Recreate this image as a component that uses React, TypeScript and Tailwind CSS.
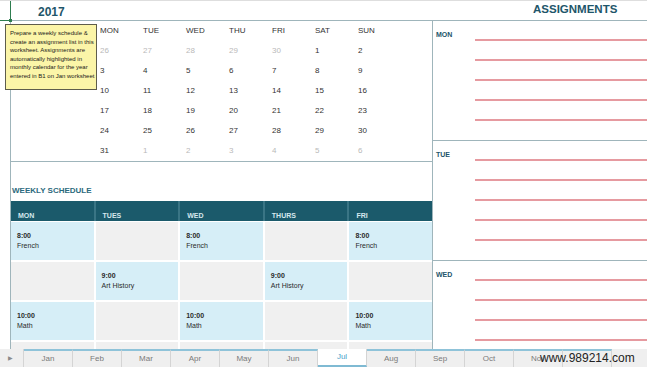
import React from "react";

const C = { line: "#9fb5bb" };

type Day = [number, boolean];
const weeks: Day[][] = [
  [[26, true], [27, true], [28, true], [29, true], [30, true], [1, false], [2, false]],
  [[3, false], [4, false], [5, false], [6, false], [7, false], [8, false], [9, false]],
  [[10, false], [11, false], [12, false], [13, false], [14, false], [15, false], [16, false]],
  [[17, false], [18, false], [19, false], [20, false], [21, false], [22, false], [23, false]],
  [[24, false], [25, false], [26, false], [27, false], [28, false], [29, false], [30, false]],
  [[31, false], [1, true], [2, true], [3, true], [4, true], [5, true], [6, true]],
];

type Slot = { t: string; s: string } | null;
const fr = { t: "8:00", s: "French" };
const ah = { t: "9:00", s: "Art History" };
const ma = { t: "10:00", s: "Math" };
const sched: Slot[][] = [
  [fr, null, fr, null, fr],
  [null, ah, null, ah, null],
  [ma, null, ma, null, ma],
  [null, null, null, null, null],
];

const tabs = ["Jan", "Feb", "Mar", "Apr", "May", "Jun", "Jul", "Aug", "Sep", "Oct", "Nov"];

function AssignSection({ label, lines }: { label: string; lines: number }) {
  return (
    <div className="h-[120px] shrink-0 flex border-b border-[#9fb5bb]">
      <div className="w-[42px] pl-[3px] pt-[10px] text-[7px] leading-[7px] font-bold text-[#23546a]">{label}</div>
      <div className="flex-1 flex flex-col pt-[18px] gap-[18px]">
        {Array.from({ length: lines }).map((_, i) => (
          <div key={i} className="h-[2px] bg-[#e69aa0]" />
        ))}
      </div>
    </div>
  );
}

export default function App() {
  return (
    <div className="w-[647px] h-[367px] overflow-hidden bg-white flex flex-col relative font-['Liberation_Sans',Arial,sans-serif]">
      <div className="h-[1px] shrink-0 bg-[#dedede]" />
      {/* header row */}
      <div className="h-[20px] shrink-0 flex">
        <div className="w-[11px] border-r border-b border-[#2e7d4f]" />
        <div className="w-[422px] border-b border-[#9fb5bb] pl-[27px] pt-[5px] text-[12px] leading-[12px] font-bold text-[#1e566a]">2017</div>
        <div className="flex-1 border-b border-[#9fb5bb] pl-[100px] pt-[3px] text-[11.5px] leading-[11.5px] font-bold text-[#1e566a]">ASSIGNMENTS</div>
      </div>
      {/* main */}
      <div className="flex-1 min-h-0 flex overflow-hidden">
        <div className="w-[10px] shrink-0" />
        <div className="w-[423px] shrink-0 border-l border-r border-[#9fb5bb] flex flex-col">
          {/* calendar */}
          <div className="h-[141px] shrink-0 border-b border-[#9fb5bb] pl-[89px] text-[8px] leading-[20px] text-[#333]">
            <div className="grid grid-cols-[repeat(7,43px)]">
              {["MON", "TUE", "WED", "THU", "FRI", "SAT", "SUN"].map((d) => (
                <div key={d} className="h-[20px]">{d}</div>
              ))}
            </div>
            {weeks.map((w, i) => (
              <div key={i} className="grid grid-cols-[repeat(7,43px)]">
                {w.map(([n, g], j) => (
                  <div key={j} className={g ? "h-[20px] text-[#b9b9b9]" : "h-[20px]"}>{n}</div>
                ))}
              </div>
            ))}
          </div>
          {/* weekly schedule */}
          <div className="h-[39px] shrink-0 pl-[1px] pt-[25px] text-[8px] leading-[8px] font-bold text-[#2b6a7d]">WEEKLY SCHEDULE</div>
          <div className="h-[20px] shrink-0 grid grid-cols-5 gap-x-[2px] bg-[#3a7585]">
            {["MON", "TUES", "WED", "THURS", "FRI"].map((d) => (
              <div key={d} className="bg-[#1b5a6b] pl-[7px] pt-[11px] text-[7px] leading-[7px] font-semibold text-[#d5e8ee]">{d}</div>
            ))}
          </div>
          <div className="flex flex-col gap-y-[2px] pt-[1px]">
            {sched.map((r, i) => (
              <div key={i} className="h-[38px] shrink-0 grid grid-cols-5 gap-x-[2px]">
                {r.map((c, j) => (
                  <div key={j} className={(c ? "bg-[#d6eef7]" : "bg-[#f0f0f0]") + " pl-[6px] pt-[9px] text-[7px] leading-[10px] text-[#2a2a2a]"}>
                    {c && (
                      <>
                        <div className="font-bold">{c.t}</div>
                        <div>{c.s}</div>
                      </>
                    )}
                  </div>
                ))}
              </div>
            ))}
          </div>
        </div>
        {/* assignments */}
        <div className="flex-1 flex flex-col">
          <AssignSection label="MON" lines={5} />
          <AssignSection label="TUE" lines={5} />
          <AssignSection label="WED" lines={5} />
        </div>
      </div>
      {/* tab bar */}
      <div className="h-[18px] shrink-0 flex bg-[#efefef] text-[8px] leading-[16px] text-[#7a7a7a]">
        <div className="w-[24px] shrink-0 border-r border-[#d4d4d4] flex items-center pl-[8px] text-[6px] text-[#8a8a8a]">▶</div>
        {tabs.map((t) =>
          t === "Jul" ? (
            <div key={t} className="w-[49px] shrink-0 bg-white border-b-2 border-[#7fbad3] text-center text-[#4a9fcb] border-r border-r-[#d4d4d4]">{t}</div>
          ) : (
            <div key={t} className="w-[49px] shrink-0 border-t-2 border-t-[#8fc3d9] border-r border-[#d4d4d4] text-center">{t}</div>
          )
        )}
        <div className="w-[49px] shrink-0 border-t-2 border-t-[#8fc3d9] border-r border-[#d4d4d4]" />
        <div className="flex-1" />
      </div>

      {/* tooltip */}
      <div className="absolute left-[5px] top-[24px] w-[92px] h-[66px] bg-[#fbf5a8] border border-[#5e5d4c] pl-[4px] pt-[4px] text-[6px] leading-[8.5px] text-[#1a1a1a] whitespace-nowrap">
        <div>Prepare a weekly schedule &amp;</div>
        <div>create an assignment list in this</div>
        <div>worksheet. Assignments are</div>
        <div>automatically highlighted in</div>
        <div>monthly calendar for the year</div>
        <div>entered in B1 on Jan worksheet</div>
      </div>
      <div className="absolute left-[9px] top-[19px] w-[3px] h-[3px] bg-[#2e7d4f]" />
      {/* watermark */}
      <div className="absolute left-[540px] top-[350px] text-[12px] leading-[16px] text-[#222] font-['Liberation_Sans',Arial,sans-serif]">www.989214.com</div>
    </div>
  );
}
